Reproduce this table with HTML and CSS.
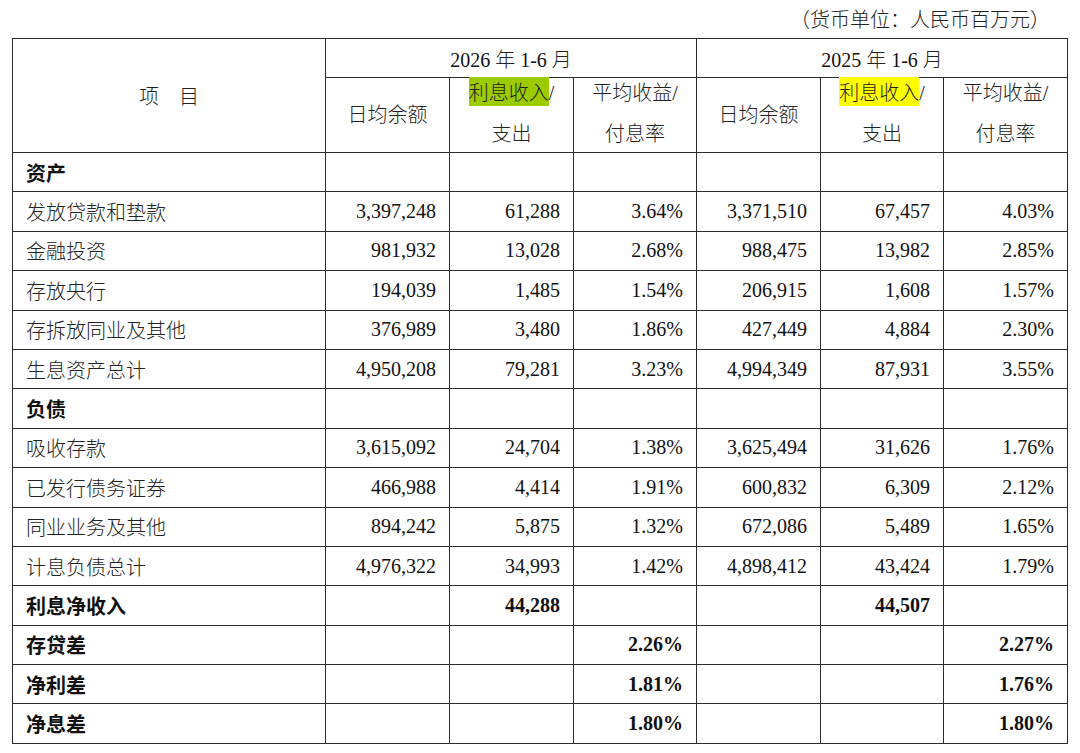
FILE: index.html
```html
<!DOCTYPE html>
<html lang="zh-CN">
<head>
<meta charset="utf-8">
<title>利息收支</title>
<link rel="stylesheet" href="styles.css">
</head>
<body>
<div class="unit"><span class="zh">（货币单位：人民币百万元）</span></div>
<table class="rate-table">
  <colgroup>
    <col class="c-item"><col class="c-num"><col class="c-num"><col class="c-num2"><col class="c-num"><col class="c-num2"><col class="c-num">
  </colgroup>
  <thead>
    <tr class="h1">
      <th rowspan="2" class="item-head"><span class="zh">项　目</span></th>
      <th colspan="3">2026 <span class="zh">年</span> 1-6 <span class="zh">月</span></th>
      <th colspan="3">2025 <span class="zh">年</span> 1-6 <span class="zh">月</span></th>
    </tr>
    <tr class="h2">
      <th><span class="zh up">日均余额</span></th>
      <th><div class="two"><span class="ln"><span class="zh hl-green">利息收入</span>/</span><span class="ln zh">支出</span></div></th>
      <th><div class="two"><span class="ln"><span class="zh">平均收益</span>/</span><span class="ln zh">付息率</span></div></th>
      <th><span class="zh up">日均余额</span></th>
      <th><div class="two"><span class="ln"><span class="zh hl-yellow">利息收入</span>/</span><span class="ln zh">支出</span></div></th>
      <th><div class="two"><span class="ln"><span class="zh">平均收益</span>/</span><span class="ln zh">付息率</span></div></th>
    </tr>
  </thead>
  <tbody>
    <tr><td class="lbl b">资产</td><td></td><td></td><td></td><td></td><td></td><td></td></tr>
    <tr><td class="lbl">发放贷款和垫款</td><td>3,397,248</td><td>61,288</td><td>3.64%</td><td>3,371,510</td><td>67,457</td><td>4.03%</td></tr>
    <tr><td class="lbl">金融投资</td><td>981,932</td><td>13,028</td><td>2.68%</td><td>988,475</td><td>13,982</td><td>2.85%</td></tr>
    <tr><td class="lbl">存放央行</td><td>194,039</td><td>1,485</td><td>1.54%</td><td>206,915</td><td>1,608</td><td>1.57%</td></tr>
    <tr><td class="lbl">存拆放同业及其他</td><td>376,989</td><td>3,480</td><td>1.86%</td><td>427,449</td><td>4,884</td><td>2.30%</td></tr>
    <tr><td class="lbl">生息资产总计</td><td>4,950,208</td><td>79,281</td><td>3.23%</td><td>4,994,349</td><td>87,931</td><td>3.55%</td></tr>
    <tr><td class="lbl b">负债</td><td></td><td></td><td></td><td></td><td></td><td></td></tr>
    <tr><td class="lbl">吸收存款</td><td>3,615,092</td><td>24,704</td><td>1.38%</td><td>3,625,494</td><td>31,626</td><td>1.76%</td></tr>
    <tr><td class="lbl">已发行债务证券</td><td>466,988</td><td>4,414</td><td>1.91%</td><td>600,832</td><td>6,309</td><td>2.12%</td></tr>
    <tr><td class="lbl">同业业务及其他</td><td>894,242</td><td>5,875</td><td>1.32%</td><td>672,086</td><td>5,489</td><td>1.65%</td></tr>
    <tr><td class="lbl">计息负债总计</td><td>4,976,322</td><td>34,993</td><td>1.42%</td><td>4,898,412</td><td>43,424</td><td>1.79%</td></tr>
    <tr class="bold-row"><td class="lbl b">利息净收入</td><td></td><td>44,288</td><td></td><td></td><td>44,507</td><td></td></tr>
    <tr class="bold-row"><td class="lbl b">存贷差</td><td></td><td></td><td>2.26%</td><td></td><td></td><td>2.27%</td></tr>
    <tr class="bold-row"><td class="lbl b">净利差</td><td></td><td></td><td>1.81%</td><td></td><td></td><td>1.76%</td></tr>
    <tr class="bold-row"><td class="lbl b">净息差</td><td></td><td></td><td>1.80%</td><td></td><td></td><td>1.80%</td></tr>
  </tbody>
</table>
</body>
</html>
```

FILE: styles.css
```css
html, body {
  margin: 0;
  padding: 0;
  background: #ffffff;
}

body {
  font-family: "Liberation Serif", "Noto Sans CJK SC", serif;
  font-size: 20px;
  color: #111;
}

.zh {
  font-family: "Noto Sans CJK SC", sans-serif;
  font-weight: 300;
  color: #222;
}

.unit {
  height: 38px;
  display: flex;
  align-items: center;
  justify-content: flex-end;
  padding-right: 30px;
  font-size: 20px;
  box-sizing: border-box;
  padding-bottom: 1px;
}

.rate-table {
  margin-left: 12px;
  width: 1055px;
  table-layout: fixed;
  border-collapse: collapse;
}

.c-item { width: 313px; }
.c-num { width: 124px; }
.c-num2 { width: 123px; }

.rate-table th,
.rate-table td {
  border: 1px solid #2a2a2a;
  padding: 0;
}

.rate-table th {
  font-weight: normal;
  text-align: center;
  vertical-align: middle;
}

.h1 { height: 39px; }
.h2 { height: 75px; }

.up {
  display: inline-block;
  padding-bottom: 4px;
}

.two {
  display: flex;
  flex-direction: column;
  align-items: center;
  gap: 20px;
  padding-bottom: 5px;
}

.ln {
  display: block;
  line-height: 20px;
}

.hl-green { background: #9ccb00; }
.hl-yellow { background: #ffff00; }

.rate-table tbody tr { height: 39.4px; }

.rate-table td {
  text-align: right;
  padding-right: 13px;
  vertical-align: middle;
  white-space: nowrap;
}

.rate-table td.lbl {
  text-align: left;
  padding-left: 13px;
  padding-right: 0;
  font-family: "Noto Sans CJK SC", sans-serif;
  font-weight: 300;
  color: #222;
}

.rate-table td.lbl.b {
  font-weight: 700;
  color: #111;
}

.bold-row td { font-weight: 700; }
```
